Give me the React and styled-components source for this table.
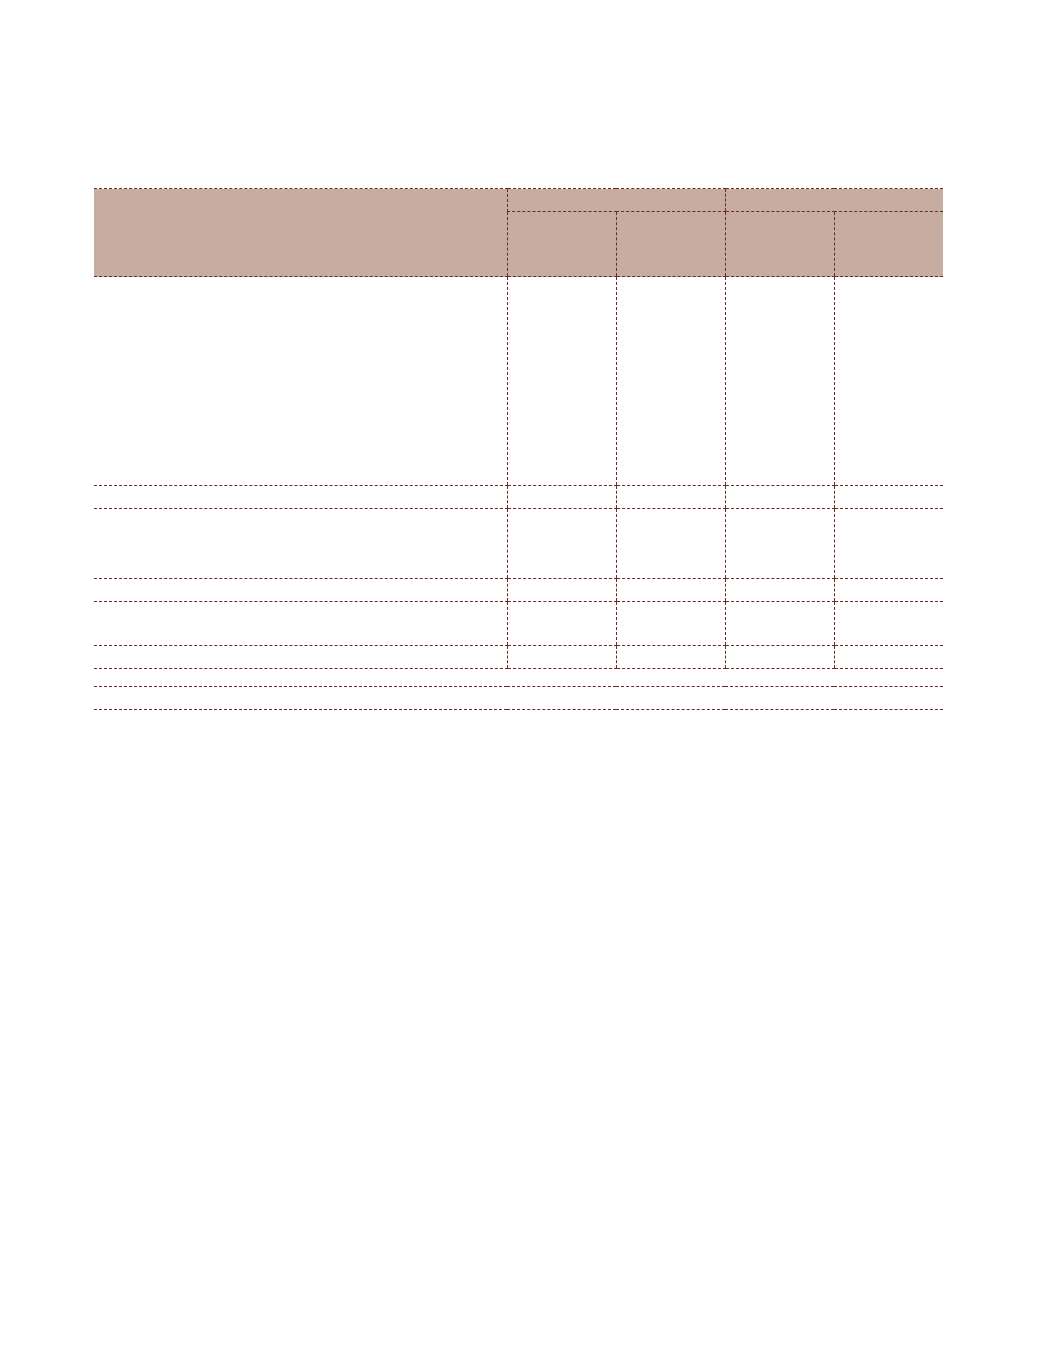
import React from "react";
import styled, { createGlobalStyle } from "styled-components";

const Global = createGlobalStyle`
  html, body { margin: 0; padding: 0; background: #ffffff; }
  body { font-family: "Liberation Sans", Arial, sans-serif; }
`;

const LINE = "1px dashed #6a2b21";

const Page = styled.div`
  width: 1039px;
  min-height: 1353px;
  box-sizing: border-box;
  padding: 188px 0 0 94px;
`;

const Table = styled.table`
  width: 849px;
  border-collapse: collapse;
  table-layout: fixed;
  font-size: 12px;
  color: #222;
`;

const Head = styled.thead`
  background: #c6aca1;
`;

const Row = styled.tr`
  height: ${(p) => p.$h}px;
`;

const Cell = styled.td`
  padding: 0;
  border-top: ${LINE};
  border-bottom: ${LINE};
  border-left: ${(p) => (p.$left ? LINE : "none")};
  border-right: none;
`;

const HCell = styled.th`
  padding: 0;
  font-weight: normal;
  border-top: ${LINE};
  border-bottom: ${LINE};
  border-left: ${(p) => (p.$left ? LINE : "none")};
  border-right: none;
`;

const bodyRows = [209, 23, 70, 23, 44, 23];

export default function App() {
  return (
    <Page>
      <Global />
      <Table>
        <colgroup>
          <col style={{ width: "413px" }} />
          <col style={{ width: "109px" }} />
          <col style={{ width: "109px" }} />
          <col style={{ width: "109px" }} />
          <col style={{ width: "109px" }} />
        </colgroup>
        <Head>
          <Row $h={23}>
            <HCell rowSpan={2} />
            <HCell colSpan={2} $left />
            <HCell colSpan={2} $left />
          </Row>
          <Row $h={65}>
            <HCell $left />
            <HCell $left />
            <HCell $left />
            <HCell $left />
          </Row>
        </Head>
        <tbody>
          {bodyRows.map((h, i) => (
            <Row key={i} $h={h}>
              <Cell />
              <Cell $left />
              <Cell $left />
              <Cell $left />
              <Cell $left />
            </Row>
          ))}
          <Row $h={18}>
            <Cell colSpan={5} />
          </Row>
          <Row $h={23}>
            <Cell colSpan={5} />
          </Row>
        </tbody>
      </Table>
    </Page>
  );
}
